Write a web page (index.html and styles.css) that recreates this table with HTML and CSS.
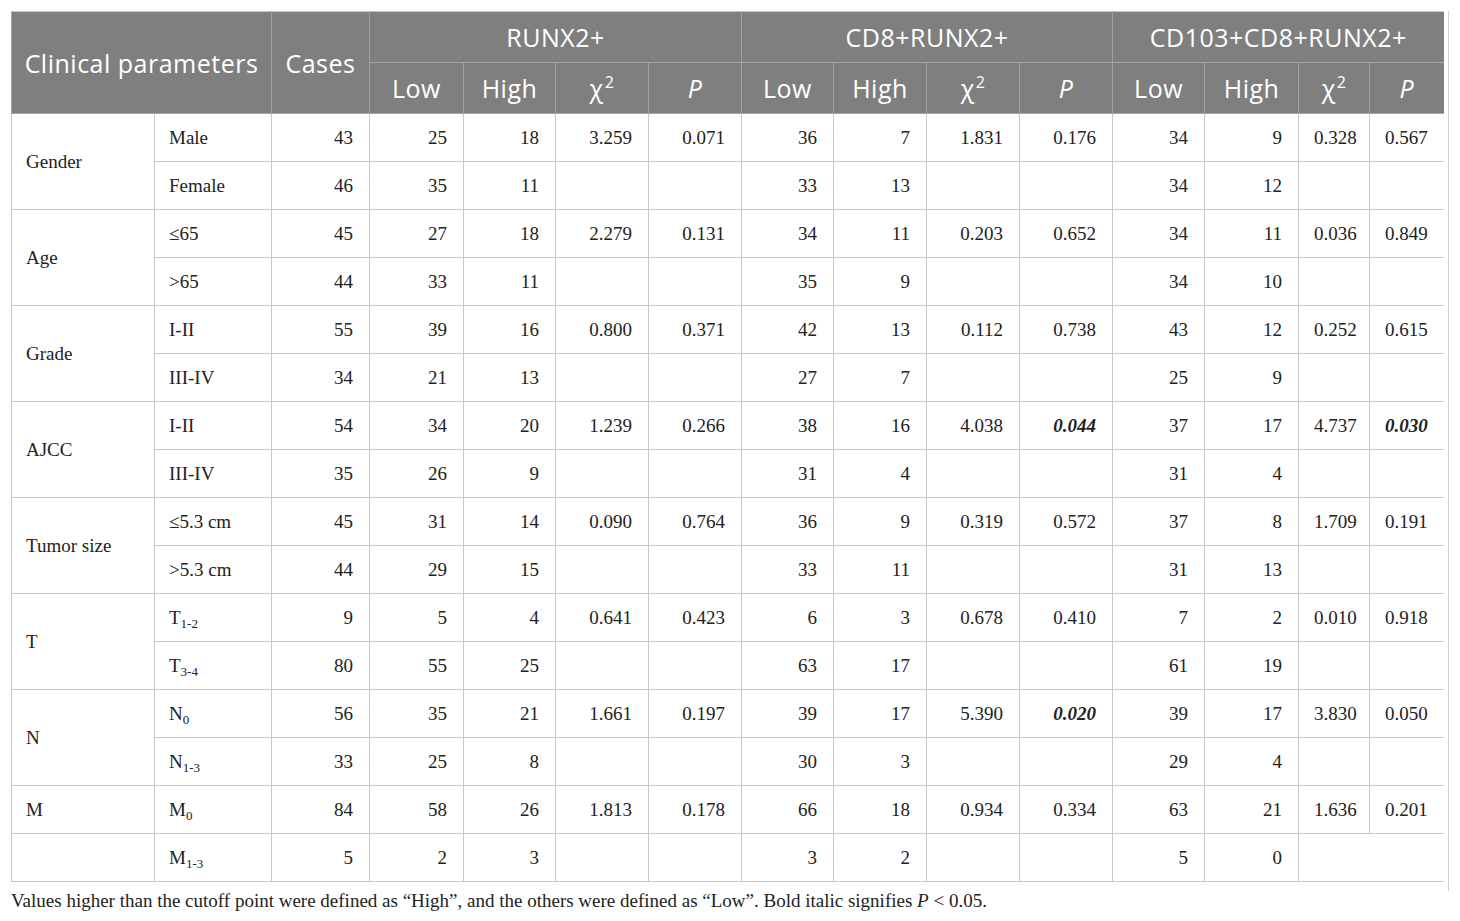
FILE: index.html
```html
<!DOCTYPE html>
<html lang="en">
<head>
<meta charset="utf-8">
<title>Clinical parameters table</title>
<link rel="stylesheet" href="styles.css">
</head>
<body>
<div class="page">
  <div class="frame">
    <table class="data">
      <colgroup>
        <col class="w143"><col class="w117"><col class="w98">
        <col class="w94"><col class="w92"><col class="w93"><col class="w93">
        <col class="w92"><col class="w93"><col class="w93"><col class="w93">
        <col class="w92"><col class="w94"><col class="w71"><col class="w74">
      </colgroup>
      <thead>
        <tr class="h1">
          <th colspan="2" rowspan="2">Clinical parameters</th>
          <th rowspan="2">Cases</th>
          <th colspan="4">RUNX2+</th>
          <th colspan="4">CD8+RUNX2+</th>
          <th colspan="4" class="last">CD103+CD8+RUNX2+</th>
        </tr>
        <tr class="h2">
          <th>Low</th><th>High</th><th>χ<sup>2</sup></th><th><i>P</i></th>
          <th>Low</th><th>High</th><th>χ<sup>2</sup></th><th><i>P</i></th>
          <th>Low</th><th>High</th><th>χ<sup>2</sup></th><th class="last"><i>P</i></th>
        </tr>
      </thead>
      <tbody>
        <tr>
          <td rowspan="2" class="lab">Gender</td><td class="lab">Male</td>
          <td>43</td><td>25</td><td>18</td><td>3.259</td><td>0.071</td><td>36</td><td>7</td><td>1.831</td><td>0.176</td><td>34</td><td>9</td><td>0.328</td><td class="last">0.567</td>
        </tr>
        <tr>
          <td class="lab">Female</td>
          <td>46</td><td>35</td><td>11</td><td></td><td></td><td>33</td><td>13</td><td></td><td></td><td>34</td><td>12</td><td></td><td class="last"></td>
        </tr>
        <tr>
          <td rowspan="2" class="lab">Age</td><td class="lab">≤65</td>
          <td>45</td><td>27</td><td>18</td><td>2.279</td><td>0.131</td><td>34</td><td>11</td><td>0.203</td><td>0.652</td><td>34</td><td>11</td><td>0.036</td><td class="last">0.849</td>
        </tr>
        <tr>
          <td class="lab">&gt;65</td>
          <td>44</td><td>33</td><td>11</td><td></td><td></td><td>35</td><td>9</td><td></td><td></td><td>34</td><td>10</td><td></td><td class="last"></td>
        </tr>
        <tr>
          <td rowspan="2" class="lab">Grade</td><td class="lab">I-II</td>
          <td>55</td><td>39</td><td>16</td><td>0.800</td><td>0.371</td><td>42</td><td>13</td><td>0.112</td><td>0.738</td><td>43</td><td>12</td><td>0.252</td><td class="last">0.615</td>
        </tr>
        <tr>
          <td class="lab">III-IV</td>
          <td>34</td><td>21</td><td>13</td><td></td><td></td><td>27</td><td>7</td><td></td><td></td><td>25</td><td>9</td><td></td><td class="last"></td>
        </tr>
        <tr>
          <td rowspan="2" class="lab">AJCC</td><td class="lab">I-II</td>
          <td>54</td><td>34</td><td>20</td><td>1.239</td><td>0.266</td><td>38</td><td>16</td><td>4.038</td><td><b><i>0.044</i></b></td><td>37</td><td>17</td><td>4.737</td><td class="last"><b><i>0.030</i></b></td>
        </tr>
        <tr>
          <td class="lab">III-IV</td>
          <td>35</td><td>26</td><td>9</td><td></td><td></td><td>31</td><td>4</td><td></td><td></td><td>31</td><td>4</td><td></td><td class="last"></td>
        </tr>
        <tr>
          <td rowspan="2" class="lab">Tumor size</td><td class="lab">≤5.3 cm</td>
          <td>45</td><td>31</td><td>14</td><td>0.090</td><td>0.764</td><td>36</td><td>9</td><td>0.319</td><td>0.572</td><td>37</td><td>8</td><td>1.709</td><td class="last">0.191</td>
        </tr>
        <tr>
          <td class="lab">&gt;5.3 cm</td>
          <td>44</td><td>29</td><td>15</td><td></td><td></td><td>33</td><td>11</td><td></td><td></td><td>31</td><td>13</td><td></td><td class="last"></td>
        </tr>
        <tr>
          <td rowspan="2" class="lab">T</td><td class="lab">T<sub>1-2</sub></td>
          <td>9</td><td>5</td><td>4</td><td>0.641</td><td>0.423</td><td>6</td><td>3</td><td>0.678</td><td>0.410</td><td>7</td><td>2</td><td>0.010</td><td class="last">0.918</td>
        </tr>
        <tr>
          <td class="lab">T<sub>3-4</sub></td>
          <td>80</td><td>55</td><td>25</td><td></td><td></td><td>63</td><td>17</td><td></td><td></td><td>61</td><td>19</td><td></td><td class="last"></td>
        </tr>
        <tr>
          <td rowspan="2" class="lab">N</td><td class="lab">N<sub>0</sub></td>
          <td>56</td><td>35</td><td>21</td><td>1.661</td><td>0.197</td><td>39</td><td>17</td><td>5.390</td><td><b><i>0.020</i></b></td><td>39</td><td>17</td><td>3.830</td><td class="last">0.050</td>
        </tr>
        <tr>
          <td class="lab">N<sub>1-3</sub></td>
          <td>33</td><td>25</td><td>8</td><td></td><td></td><td>30</td><td>3</td><td></td><td></td><td>29</td><td>4</td><td></td><td class="last"></td>
        </tr>
        <tr>
          <td class="lab">M</td><td class="lab">M<sub>0</sub></td>
          <td>84</td><td>58</td><td>26</td><td>1.813</td><td>0.178</td><td>66</td><td>18</td><td>0.934</td><td>0.334</td><td>63</td><td>21</td><td>1.636</td><td class="last">0.201</td>
        </tr>
        <tr>
          <td class="lab"></td><td class="lab">M<sub>1-3</sub></td>
          <td>5</td><td>2</td><td>3</td><td></td><td></td><td>3</td><td>2</td><td></td><td></td><td>5</td><td>0</td><td colspan="2" class="last"></td>
        </tr>
      </tbody>
    </table>
  </div>
  <p class="note">Values higher than the cutoff point were defined as “High”, and the others were defined as “Low”. Bold italic signifies <i>P</i> &lt; 0.05.</p>
</div>
</body>
</html>
```

FILE: styles.css
```css
html, body {
  margin: 0;
  padding: 0;
  background: #ffffff;
}

body {
  font-family: "Liberation Serif", "Times New Roman", serif;
  color: #222222;
}

.page {
  padding: 11px 0 0 11px;
}

.frame {
  width: 1437px;
  border-right: 1px solid #d2d2d2;
  padding-bottom: 9px;
}

.data {
  border-collapse: collapse;
  table-layout: fixed;
  width: 1432px;
}

.w143 { width: 143px; }
.w117 { width: 117px; }
.w98 { width: 98px; }
.w94 { width: 94px; }
.w93 { width: 93px; }
.w92 { width: 92px; }
.w71 { width: 71px; }
.w74 { width: 74px; }

.data th {
  background: #7f7f7f;
  color: #ffffff;
  font-family: "Open Sans", "DejaVu Sans", sans-serif;
  font-weight: 400;
  font-size: 25px;
  letter-spacing: 0.5px;
  text-align: center;
  vertical-align: middle;
  border: 1px solid #a3a3a3;
  border-top-color: #c8c8c8;
  padding: 0;
  height: 50px;
  line-height: 1.2;
}

.data th sup {
  font-size: 16px;
  vertical-align: 10px;
  line-height: 0;
  margin-left: 1px;
}

.data th.last {
  border-right: none;
}

.data td {
  border: 1px solid #c8c8c8;
  height: 47px;
  padding: 0 16px 0 15px;
  font-size: 19px;
  text-align: right;
  vertical-align: middle;
  line-height: 1;
}

.data td.lab {
  text-align: left;
  padding-left: 14px;
}

.data td.last {
  border-right: none;
}

.data td sub {
  font-size: 13px;
  vertical-align: -4px;
  line-height: 0;
}

.note {
  margin: 0;
  padding-top: 0;
  font-size: 19px;
  line-height: 20px;
  color: #222222;
}
```
